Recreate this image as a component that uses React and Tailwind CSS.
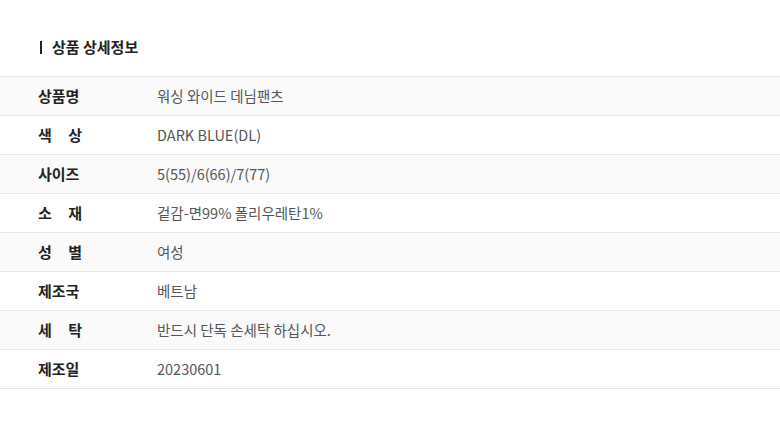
import React from "react";

const rows = [
  ["상품명", "워싱 와이드 데님팬츠"],
  ["색상", "DARK BLUE(DL)"],
  ["사이즈", "5(55)/6(66)/7(77)"],
  ["소재", "겉감-면99% 폴리우레탄1%"],
  ["성별", "여성"],
  ["제조국", "베트남"],
  ["세탁", "반드시 단독 손세탁 하십시오."],
  ["제조일", "20230601"],
];

function Label({ text }) {
  const chars = text.split("");
  if (chars.length === 2) {
    return (
      <div className="flex w-[44px] justify-between">
        <span>{chars[0]}</span>
        <span>{chars[1]}</span>
      </div>
    );
  }
  return <div className="whitespace-nowrap">{text}</div>;
}

export default function App() {
  return (
    <div
      className="w-[780px] h-[427px] bg-white"
      style={{ fontFamily: '"Noto Sans CJK KR", "Noto Sans", sans-serif' }}
    >
      <div className="pt-[36px] pl-[40px] flex items-center h-[76px] pb-[18px]">
        <div className="w-[2px] h-[13px] bg-[#222]" />
        <div className="ml-[10px] text-[15px] leading-[22px] font-bold text-[#222]">
          상품 상세정보
        </div>
      </div>
      <div className="border-t border-[#e5e5e5]">
        {rows.map(([k, v], i) => (
          <div
            key={k}
            className={`grid grid-cols-[157px_1fr] items-center h-[39px] border-b border-[#e5e5e5] ${
              i % 2 === 0 ? "bg-[#fafafa]" : "bg-white"
            }`}
          >
            <div className="pl-[38px] text-[15px] font-bold text-[#222]">
              <Label text={k} />
            </div>
            <div className="text-[14.5px] text-[#555] whitespace-nowrap">{v}</div>
          </div>
        ))}
      </div>
    </div>
  );
}
